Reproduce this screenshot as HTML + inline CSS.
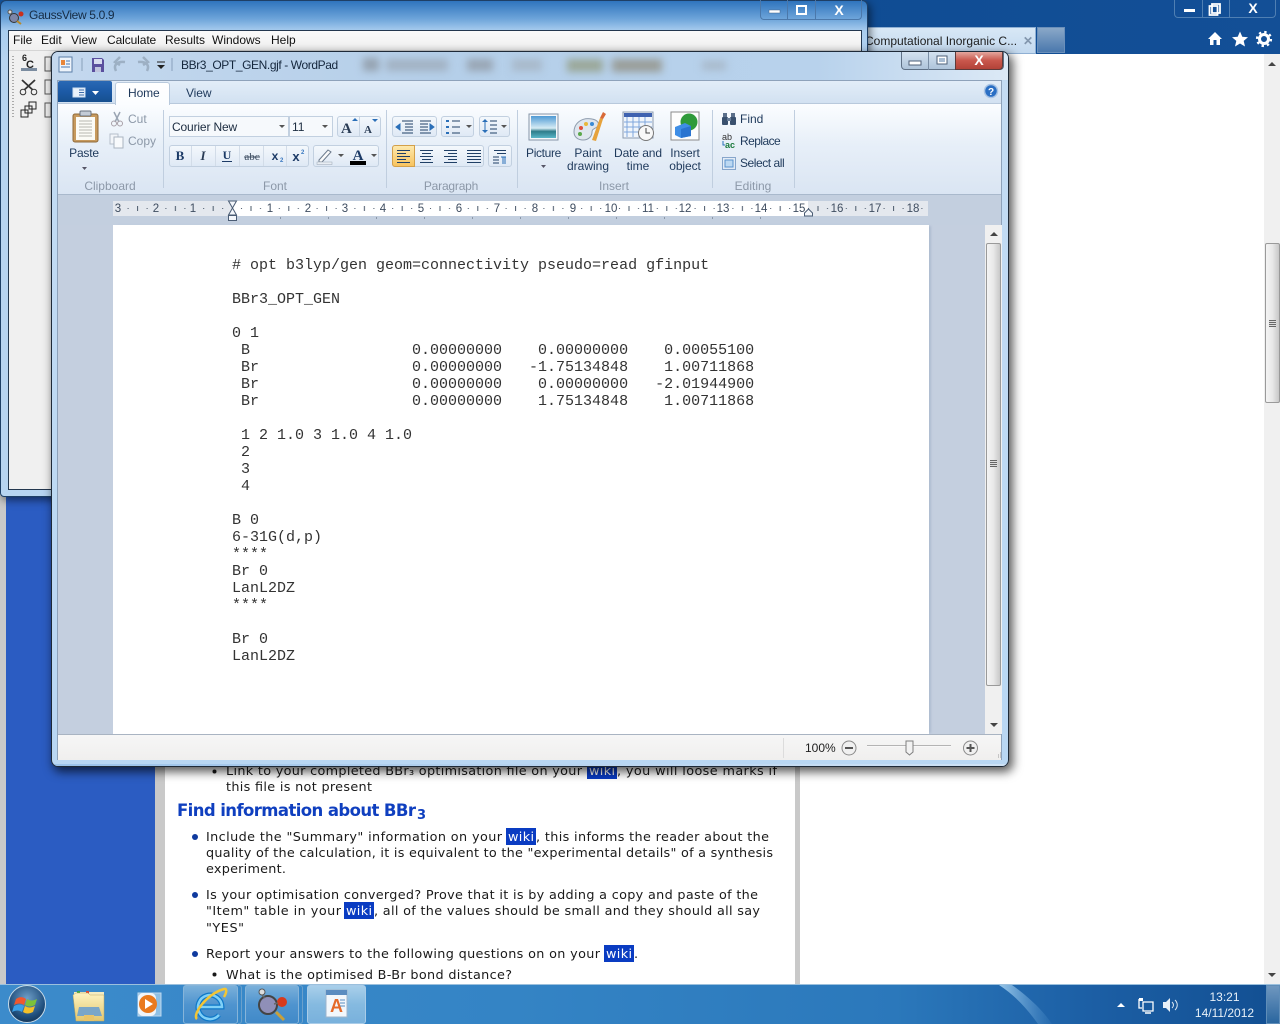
<!DOCTYPE html>
<html lang="en"><head><meta charset="utf-8"><title>WordPad</title>
<style>
html,body{margin:0;padding:0;width:1280px;height:1024px;overflow:hidden;background:#fff}
body{position:relative;font-family:"Liberation Sans",sans-serif;font-size:12px}
.a{position:absolute;box-sizing:border-box}
.t{position:absolute;white-space:nowrap;line-height:14px;height:14px}
.c{transform:translateX(-50%)}
.r{color:#1e395b}
.g{color:#8c98a8}
.btn{position:absolute;box-sizing:border-box;border:1px solid #c2d0e0;border-radius:3px;background:linear-gradient(#f4f8fc,#dfe9f5)}
.sep{position:absolute;top:110px;height:78px;width:1px;background:#c0cedf}
svg{position:absolute;overflow:visible}
pre{margin:0;font:15px/17px "Liberation Mono",monospace;color:#333}
.n{position:absolute;top:202px;font-size:11.5px;line-height:14px;color:#3f4d60;transform:translateX(-50%)}
</style></head><body>

<!-- browser background -->
<div class="a" style="left:0;top:0;width:1280px;height:54px;background:linear-gradient(90deg,#14549e,#0f4c94 60%,#134f96)"></div>
<div class="a" style="left:0;top:54px;width:6px;height:930px;background:#c9c9c9"></div>
<div class="a" style="left:6px;top:54px;width:149px;height:930px;background:#2b5cc2"></div>
<div class="a" style="left:155px;top:54px;width:10px;height:930px;background:#c9c9c9"></div>
<div class="a" style="left:795px;top:54px;width:5px;height:930px;background:#c9c9c9"></div>
<div class="a" style="left:1264px;top:54px;width:16px;height:930px;background:#f0f0f0"></div>
<div class="a" style="left:1265px;top:243px;width:15px;height:160px;border:1px solid #9a9a9a;border-radius:2px;background:linear-gradient(90deg,#f4f4f4,#e8e8e8 50%,#c8c8c8)"></div>
<div class="a" style="left:1269px;top:320px;width:7px;height:7px;background:repeating-linear-gradient(#666 0 1px,#ddd 1px 2px)"></div>
<svg style="left:0;top:0" width="1280" height="1024">
<path d="M1268 66l4-4 4 4zM1268 973l8 0-4 4z" fill="#444"/>
</svg>

<!-- browser tab & controls -->
<div class="a" style="left:860px;top:27px;width:176px;height:27px;background:linear-gradient(#d8e8f6,#c3d9ef);border:1px solid #8fb0d4"></div>
<div class="t" style="left:865px;top:34px;font-size:12px;color:#1c1c1c">Computational Inorganic C...</div>
<div class="t" style="left:1023px;top:34px;font-weight:bold;color:#8296ad;font-size:12px">✕</div>
<div class="a" style="left:1037px;top:27px;width:28px;height:26px;background:linear-gradient(#8aa8c8,#4a78ad);border:1px solid #6a8fba"></div>
<div class="a" style="left:1174px;top:0;width:102px;height:18px;border:1px solid #4f7fb3;border-top:0;border-radius:0 0 4px 4px"></div>
<div class="a" style="left:1202px;top:0;width:1px;height:18px;background:#4f7fb3"></div>
<div class="a" style="left:1229px;top:0;width:1px;height:18px;background:#4f7fb3"></div>
<svg style="left:0;top:0" width="1280" height="60">
<rect x="1184" y="9" width="11" height="3" fill="#fff"/>
<path d="M1212 4h8v9h-8zM1209.500 6h8v9h-8z" fill="none" stroke="#fff" stroke-width="1.800"/>
<text x="1253" y="13" text-anchor="middle" font-family="Liberation Sans,sans-serif" font-weight="bold" font-size="14" fill="#fff">X</text>
<path d="M1215 32l7 7h-2v6h-3.500v-5h-3v5H1210v-6h-2z" fill="#fff"/>
<path d="M1240 31.500l2.300 5.200 5.700.5-4.300 3.700 1.300 5.600-5-3-5 3 1.300-5.600-4.300-3.700 5.700-.5z" fill="#fff"/>
<circle cx="1264" cy="39" r="4.500" fill="none" stroke="#fff" stroke-width="3"/>
<circle cx="1264" cy="39" r="7" fill="none" stroke="#fff" stroke-width="2.200" stroke-dasharray="2.400 3.100"/>
</svg>

<!-- web page text -->
<svg style="left:0;top:0" width="1280" height="1024" font-family="DejaVu Sans,sans-serif" font-size="12.800" fill="#1a1a1a">
<rect x="587" y="762" width="30" height="17" fill="#0a3cc2"/>
<rect x="506" y="828" width="30" height="17" fill="#0a3cc2"/>
<rect x="344" y="902" width="30" height="17" fill="#0a3cc2"/>
<rect x="604" y="945" width="30" height="17" fill="#0a3cc2"/>
<text x="226" y="775" textLength="356">Link to your completed BBr₃ optimisation file on your</text>
<text x="589" y="775" textLength="26" fill="#fff">wiki</text>
<text x="617" y="775" textLength="160">, you will loose marks if</text>
<text x="226" y="791" textLength="146">this file is not present</text>
<text x="177" y="816" textLength="239" font-size="16.500" font-weight="bold" fill="#0f3fbf">Find information about BBr</text>
<text x="417" y="819" font-size="13" font-weight="bold" fill="#0f3fbf">3</text>
<text x="206" y="841" textLength="296">Include the "Summary" information on your</text>
<text x="508" y="841" textLength="26" fill="#fff">wiki</text>
<text x="536" y="841" textLength="233">, this informs the reader about the</text>
<text x="206" y="857" textLength="567">quality of the calculation, it is equivalent to the "experimental details" of a synthesis</text>
<text x="206" y="873" textLength="80">experiment.</text>
<text x="206" y="899" textLength="552">Is your optimisation converged? Prove that it is by adding a copy and paste of the</text>
<text x="206" y="915" textLength="135">"Item" table in your</text>
<text x="346" y="915" textLength="26" fill="#fff">wiki</text>
<text x="374" y="915" textLength="386">, all of the values should be small and they should all say</text>
<text x="206" y="932" textLength="38">"YES"</text>
<text x="206" y="958" textLength="394">Report your answers to the following questions on on your</text>
<text x="606" y="958" textLength="26" fill="#fff">wiki</text>
<text x="634" y="958">.</text>
<text x="226" y="979" textLength="286">What is the optimised B-Br bond distance?</text>
<g fill="#0f3a9e"><circle cx="195" cy="837" r="3"/><circle cx="195" cy="895" r="3"/><circle cx="195" cy="954" r="3"/></g>
<g fill="#1a1a1a"><circle cx="214.500" cy="771.500" r="2"/><circle cx="214.500" cy="974.500" r="2"/></g>
</svg>

<!-- GaussView window -->
<div class="a" style="left:0;top:0;width:868px;height:497px;background:linear-gradient(#2f74bd 0,#6ea5da 18px,#a9cdef 30px,#b7d4f1 60px);border:1px solid #1e3f66;border-radius:6px 6px 4px 4px;box-shadow:2px 3px 9px rgba(0,0,0,.55)"></div>
<div class="a" style="left:8px;top:30px;width:854px;height:460px;background:#f0f0f0;border:1px solid #23374f"></div>
<div class="a" style="left:9px;top:31px;width:852px;height:20px;background:linear-gradient(#fafafa,#f0f0f0);border-bottom:1px solid #d5d5d5"></div>
<svg style="left:0;top:0" width="60" height="30">
<circle cx="14" cy="18" r="4.500" fill="#7d86a8" stroke="#333"/><circle cx="10" cy="12" r="2" fill="#ddd" stroke="#555"/><circle cx="21" cy="14" r="2.500" fill="#c9301c"/><path d="M17 21l4 3" stroke="#b8892a" stroke-width="2"/>
</svg>
<div class="t" style="left:29px;top:8px;color:#152b44;letter-spacing:-.35px">GaussView 5.0.9</div>
<div class="t" style="left:13px;top:33px;color:#111">File</div>
<div class="t" style="left:41px;top:33px;color:#111">Edit</div>
<div class="t" style="left:71px;top:33px;color:#111">View</div>
<div class="t" style="left:107px;top:33px;color:#111;letter-spacing:-.1px">Calculate</div>
<div class="t" style="left:165px;top:33px;color:#111">Results</div>
<div class="t" style="left:212px;top:33px;color:#111">Windows</div>
<div class="t" style="left:271px;top:33px;color:#111">Help</div>
<div class="a" style="left:760px;top:0;width:102px;height:20px;border:1px solid #4b78aa;border-top:0;border-radius:0 0 4px 4px"></div>
<div class="a" style="left:787px;top:0;width:1px;height:20px;background:#4b78aa"></div>
<div class="a" style="left:815px;top:0;width:1px;height:20px;background:#4b78aa"></div>
<svg style="left:0;top:0" width="868" height="30">
<rect x="769" y="10" width="11" height="3" fill="#fff" stroke="#42648c" stroke-width=".5"/>
<rect x="797" y="6" width="9" height="8" fill="none" stroke="#fff" stroke-width="2"/>
<text x="839" y="15" text-anchor="middle" font-family="Liberation Sans,sans-serif" font-weight="bold" font-size="14" fill="#fff">X</text>
</svg>
<!-- gauss toolbar -->
<svg style="left:0;top:0" width="60" height="130">
<path d="M13 56v62" stroke="#aaa" stroke-width="2" stroke-dasharray="1 2"/>
<text x="22" y="61" font-family="Liberation Sans,sans-serif" font-weight="bold" font-size="9" fill="#222">6</text>
<text x="26" y="68" font-family="Liberation Sans,sans-serif" font-weight="bold" font-size="11" fill="#222">C</text>
<rect x="21" y="68" width="16" height="3" fill="#7b8ca0"/>
<path d="M22 80l13 12M35 80L22 92" stroke="#333" stroke-width="1.800"/><circle cx="23" cy="92" r="2.800" fill="#f0f0f0" stroke="#333"/><circle cx="34" cy="92" r="2.800" fill="#f0f0f0" stroke="#333"/>
<path d="M21 110h7v7h-7zM25 106h7v7h-7zM29 102h7v7h-7z" fill="#f0f0f0" stroke="#222"/>
<path d="M45 57h6v14h-6zM45 80h6v14h-6zM45 103h6v14h-6z" fill="none" stroke="#555"/>
</svg>

<!-- WordPad window -->
<div class="a" style="left:51px;top:51px;width:958px;height:716px;border:1px solid #1e2a38;border-radius:7px;background:linear-gradient(#a9c8e7,#c4dcf3 30px,#b9d7f3 700px);box-shadow:3px 4px 10px 1px rgba(0,0,0,.65);overflow:hidden">
 <div class="a" style="left:0;top:0;width:956px;height:28px;background:linear-gradient(90deg,#c4d8ee,#b5cfe9 40%,#b8d2ec 80%,#dce9f6);"></div>
 <div style="position:absolute;left:0;top:0;width:956px;height:28px;filter:blur(4px)">
  <i class="a" style="left:311px;top:6px;width:16px;height:13px;background:#95a2b0"></i>
  <i class="a" style="left:334px;top:7px;width:62px;height:12px;background:#a2b2c3"></i>
  <i class="a" style="left:415px;top:7px;width:26px;height:12px;background:#98a5b3"></i>
  <i class="a" style="left:460px;top:7px;width:30px;height:12px;background:#a8b9ca"></i>
  <i class="a" style="left:515px;top:7px;width:36px;height:13px;background:#9aa798"></i>
  <i class="a" style="left:560px;top:7px;width:50px;height:13px;background:#999d98"></i>
  <i class="a" style="left:650px;top:9px;width:24px;height:9px;background:#a8b9ca"></i>
 </div>
 <div class="a" style="left:0;top:712px;width:956px;height:3px;background:linear-gradient(90deg,#9cc3ea,#cfe2f5)"></div>
</div>
<svg style="left:0;top:0" width="1010" height="80">
<rect x="59" y="57" width="13" height="15" fill="#eef4fb" stroke="#5a7ea8"/><rect x="61" y="60" width="4" height="5" fill="#e8863a"/><path d="M66 61h4M66 64h4M61 67h9" stroke="#4a78b0"/>
<path d="M82 58v13" stroke="#88a0bb"/>
<path d="M92 58h10l2 2v12H92z" fill="#5a4f9e"/><rect x="94" y="59" width="8" height="5" fill="#d8dcf0"/><rect x="95" y="67" width="6" height="5" fill="#c0c4de"/>
<path d="M116 71c-3-6 1-10 9-9M120 57l-5 5 5 3" fill="none" stroke="#9db0c4" stroke-width="2.500"/>
<path d="M147 71c3-6-1-10-9-9M143 57l5 5-5 3" fill="none" stroke="#9db0c4" stroke-width="2.500"/>
<path d="M157 62h8" stroke="#222"/><path d="M157 65h8l-4 4z" fill="#222"/>
<path d="M172 58v13" stroke="#88a0bb"/>
</svg>
<div class="t" style="left:181px;top:58px;color:#14263c;letter-spacing:-.4px">BBr3_OPT_GEN.gjf - WordPad</div>
<div class="a" style="left:901px;top:52px;width:103px;height:18px;border:1px solid #5e7085;border-top:0;border-radius:0 0 4px 4px;background:linear-gradient(#d4e2f0,#aec4da)"></div>
<div class="a" style="left:928px;top:52px;width:1px;height:18px;background:#7a8ea5"></div>
<div class="a" style="left:955px;top:52px;width:48px;height:18px;border-radius:0 0 4px 0;background:linear-gradient(#e3a79e,#c9574c 50%,#b24238);border:1px solid #5e3a3a;border-top:0"></div>
<svg style="left:0;top:0" width="1010" height="80">
<rect x="909" y="61" width="12" height="4" fill="#fff" stroke="#4f6078"/>
<rect x="937" y="56" width="10" height="8" fill="#fff" stroke="#4f6078" stroke-width="1"/><rect x="939" y="58" width="6" height="4" fill="#a8bcd2"/>
<text x="979" y="65" text-anchor="middle" font-family="Liberation Sans,sans-serif" font-weight="bold" font-size="14" fill="#fff">X</text>
</svg>

<!-- ribbon -->
<div class="a" style="left:57px;top:80px;width:945px;height:680px;border:1px solid #8ea2ba;background:#c4cfdf"></div>
<div class="a" style="left:58px;top:81px;width:943px;height:22px;background:linear-gradient(#e2edf8,#d2e1f1)"></div>
<div class="a" style="left:58px;top:81px;width:54px;height:21px;background:linear-gradient(#2a69b5,#1c5aa6 50%,#16508f);border-radius:2px 2px 0 0"></div>
<svg style="left:0;top:0" width="112" height="103">
<rect x="73" y="88" width="12" height="9" fill="#eaf2fb" stroke="#cfe0f2"/><path d="M79 90h5M79 92.500h5M79 95h5" stroke="#3a6aa8"/>
<path d="M92 91h7l-3.500 4z" fill="#fff"/>
</svg>
<div class="a" style="left:115px;top:82px;width:55px;height:22px;border:1px solid #b8c9dc;border-bottom:0;border-radius:3px 3px 0 0;background:linear-gradient(#fff,#fbfdff)"></div>
<div class="t r" style="left:128px;top:86px;letter-spacing:-.1px">Home</div>
<div class="t r" style="left:186px;top:86px;letter-spacing:-.1px">View</div>
<div class="a" style="left:58px;top:103px;width:943px;height:92px;background:linear-gradient(#fbfdff,#e7eff8 45%,#dae5f3);border-top:1px solid #b8c9dc;border-bottom:1px solid #a9b9cc"></div>
<div class="a" style="left:115px;top:102px;width:55px;height:3px;background:#fbfdff;border-left:1px solid #b8c9dc;border-right:1px solid #b8c9dc"></div>
<svg style="left:0;top:0" width="1010" height="110">
<circle cx="991" cy="91" r="6.500" fill="#2a6fc4" stroke="#a9c4e4" stroke-width="1.500"/>
<text x="991" y="95" text-anchor="middle" font-family="Liberation Sans,sans-serif" font-weight="bold" font-size="10" fill="#fff">?</text>
</svg>
<div class="sep" style="left:163px"></div><div class="sep" style="left:386px"></div><div class="sep" style="left:517px"></div><div class="sep" style="left:712px"></div><div class="sep" style="left:794px"></div>
<div class="t g c" style="left:110px;top:179px">Clipboard</div>
<div class="t g c" style="left:275px;top:179px">Font</div>
<div class="t g c" style="left:451px;top:179px;letter-spacing:-.2px">Paragraph</div>
<div class="t g c" style="left:614px;top:179px">Insert</div>
<div class="t g c" style="left:753px;top:179px">Editing</div>

<!-- clipboard -->
<svg style="left:0;top:0" width="160" height="175">
<rect x="73" y="114" width="25" height="28" rx="2" fill="#c79a5e" stroke="#8f6a3a"/>
<rect x="76" y="117" width="19" height="23" fill="#fbfbf6"/>
<path d="M79 121h13M79 124h13M79 127h13M79 130h13M79 133h13M79 136h13" stroke="#b7b7b0"/>
<rect x="80" y="111" width="11" height="5" rx="1" fill="#c4ccd6" stroke="#68727e"/>
<path d="M82 167h5l-2.500 3z" fill="#556"/>
<path d="M114 112l5 10M120 112l-5 10" stroke="#9aa5b3" stroke-width="1.500"/><circle cx="114" cy="123.500" r="2.500" fill="none" stroke="#a8a0a8"/><circle cx="120" cy="123.500" r="2.500" fill="none" stroke="#a8a0a8"/>
<rect x="110" y="134" width="8" height="10" fill="#f2f5f9" stroke="#b6bfca"/><rect x="114" y="137" width="9" height="11" fill="#f8fafc" stroke="#aab4c0"/>
</svg>
<div class="t r c" style="left:84px;top:146px;letter-spacing:-.2px">Paste</div>
<div class="t g" style="left:128px;top:112px">Cut</div>
<div class="t g" style="left:128px;top:134px">Copy</div>

<!-- font group -->
<div class="a" style="left:169px;top:116px;width:120px;height:21px;border:1px solid #c2d0e0;background:#f6f9fc"></div>
<div class="a" style="left:289px;top:116px;width:44px;height:21px;border:1px solid #c2d0e0;background:#f6f9fc"></div>
<div class="t" style="left:172px;top:120px;color:#1c2c40;letter-spacing:-.15px">Courier New</div>
<div class="t" style="left:292px;top:120px;color:#1c2c40">11</div>
<div class="btn" style="left:337px;top:116px;width:44px;height:21px"></div>
<div class="a" style="left:359px;top:117px;width:1px;height:19px;background:#c8d4e2"></div>
<div class="btn" style="left:169px;top:145px;width:140px;height:22px"></div>
<div class="a" style="left:191px;top:146px;width:1px;height:20px;background:#d2dce8"></div>
<div class="a" style="left:215px;top:146px;width:1px;height:20px;background:#d2dce8"></div>
<div class="a" style="left:239px;top:146px;width:1px;height:20px;background:#d2dce8"></div>
<div class="a" style="left:263px;top:146px;width:1px;height:20px;background:#d2dce8"></div>
<div class="a" style="left:286px;top:146px;width:1px;height:20px;background:#d2dce8"></div>
<div class="btn" style="left:313px;top:145px;width:66px;height:22px"></div>
<svg style="left:0;top:0" width="400" height="180" font-family="Liberation Serif,serif" font-weight="bold" fill="#1c3a66">
<path d="M279 125h6l-3 3zM322 125h6l-3 3z" fill="#555"/>
<text x="341" y="133" font-size="15" fill="#2a3c55">A</text><path d="M352 121l3-3 3 3z" fill="#2a6fb8"/>
<text x="364" y="133" font-size="11" fill="#2a3c55">A</text><path d="M372 119l3 3 3-3z" fill="#2a6fb8"/>
<text x="180" y="160" text-anchor="middle" font-size="13">B</text>
<text x="203" y="160" text-anchor="middle" font-size="13" font-style="italic" fill="#2a3c55">I</text>
<text x="227" y="159" text-anchor="middle" font-size="12">U</text><rect x="222" y="161" width="10" height="1" fill="#1c3a66"/>
<text x="252" y="160" text-anchor="middle" font-size="11" font-weight="normal" fill="#3c4c60">abc</text><rect x="244" y="156.500" width="16" height="1" fill="#3c4c60"/>
<text x="275" y="160" text-anchor="middle" font-family="Liberation Sans,sans-serif" font-size="12">x</text><text x="280" y="162" font-size="6" font-family="Liberation Sans,sans-serif" fill="#3a78c0">2</text>
<text x="296" y="161" text-anchor="middle" font-family="Liberation Sans,sans-serif" font-size="13">x</text><text x="301" y="154" font-size="6" font-family="Liberation Sans,sans-serif" fill="#3a78c0">2</text>
<path d="M319 160l9-10 3 2-9 10h-3z" fill="#fafafa" stroke="#6b7a8c"/><rect x="317" y="162" width="15" height="2.500" fill="#e8edf3" stroke="#9aa5b3" stroke-width=".5"/>
<path d="M338 154h6l-3 3zM371 154h6l-3 3z" fill="#555"/>
<text x="358" y="160" text-anchor="middle" font-size="15" fill="#1c3a66">A</text><rect x="350" y="161" width="16" height="4" fill="#000"/>
</svg>

<!-- paragraph group -->
<div class="btn" style="left:392px;top:116px;width:45px;height:21px"></div>
<div class="btn" style="left:441px;top:116px;width:33px;height:21px"></div>
<div class="btn" style="left:479px;top:116px;width:31px;height:21px"></div>
<div class="btn" style="left:392px;top:145px;width:92px;height:22px"></div>
<div class="a" style="left:392px;top:145px;width:23px;height:22px;background:linear-gradient(#fde9ad,#f8c35e);border:1px solid #d3a04a;border-radius:3px 0 0 3px"></div>
<div class="btn" style="left:488px;top:145px;width:24px;height:22px"></div>
<svg style="left:0;top:0" width="520" height="180" stroke="#1f3f66" fill="none">
<path d="M402 121h11M405 124h8M405 127h8M405 130h8M402 133h11"/><path d="M396 127l4-3v6z" fill="#2a6fb8" stroke="#2a6fb8"/>
<path d="M420 121h11M420 124h8M420 127h8M420 130h8M420 133h11"/><path d="M434 127l-4-3v6z" fill="#2a6fb8" stroke="#2a6fb8"/>
<path d="M452 121h8M452 127h8M452 133h8"/><path d="M446 120h3v2h-3zM446 126h3v2h-3zM446 132h3v2h-3z" fill="#2a6fb8" stroke="none"/>
<path d="M466 125h6l-3 3z" fill="#555" stroke="none"/>
<path d="M490 121h7M490 125h7M490 129h7M490 133h7"/><path d="M482 122l3-3 3 3zM482 130l3 3 3-3z" fill="#2a6fb8" stroke="none"/><path d="M485 122v8" stroke="#2a6fb8"/>
<path d="M501 125h6l-3 3z" fill="#555" stroke="none"/>
<path d="M397 150.500h13M397 153.500h9M397 156.500h13M397 159.500h9M397 162.500h13"/>
<path d="M420 150.500h13M422 153.500h9M420 156.500h13M422 159.500h9M420 162.500h13"/>
<path d="M444 150.500h13M448 153.500h9M444 156.500h13M448 159.500h9M444 162.500h13"/>
<path d="M467 150.500h14M467 153.500h14M467 156.500h14M467 159.500h14M467 162.500h14"/>
<path d="M494 150.500h12M497 153.500h9M493 157h6M493 160h6M493 163h6"/><path d="M501 157h5M503 157v7M505 157v7" stroke="#2a6fb8"/>
</svg>

<!-- insert group -->
<svg style="left:0;top:0" width="800" height="180">
<defs><linearGradient id="sky" x1="0" y1="0" x2="0" y2="1"><stop offset="0" stop-color="#4f9ad4"/><stop offset=".55" stop-color="#d6ecf5"/><stop offset=".7" stop-color="#2e7c8a"/><stop offset="1" stop-color="#5ab6c8"/></linearGradient></defs>
<rect x="529" y="114" width="29" height="26" fill="#f5f7fa" stroke="#8595a8"/><rect x="531" y="116" width="25" height="22" fill="url(#sky)"/>
<path d="M574 132c0-9 8-15 18-13 6 1 8 5 5 8-3 2-5 2-5 5 0 4-3 8-9 8-5 0-9-3-9-8z" fill="#dfe6ee" stroke="#8e9cad"/>
<circle cx="581" cy="128" r="2" fill="#e0503c"/><circle cx="586" cy="124" r="2" fill="#e8b83a"/><circle cx="580" cy="134" r="2" fill="#5aa84a"/><circle cx="592" cy="124" r="2" fill="#3a8ad4"/>
<path d="M592 140l8-22 3 1-7 22z" fill="#e6a23c"/><path d="M600 118l3-6 3 2-3 5z" fill="#d86a38"/>
<rect x="623" y="112" width="30" height="26" fill="#f0f5fb" stroke="#8c9bb0"/><rect x="624" y="113" width="28" height="4" fill="#3f62b0"/>
<path d="M627 117v20M633 117v20M639 117v20M645 117v20M624 122h28M624 127h28M624 132h28" stroke="#7fa6dc"/>
<circle cx="646" cy="133" r="7.500" fill="#f8f8f8" stroke="#777"/><path d="M646 128v5h4" stroke="#444" fill="none"/>
<rect x="671" y="112" width="28" height="28" fill="#fdfdfd" stroke="#8a8a8a"/>
<circle cx="689" cy="122" r="8.500" fill="#2f9a3a"/><path d="M675 127l10-4 6 3v10l-10 2-6-3z" fill="#3f8ee6"/><path d="M681 129l10-3v10l-10 2z" fill="#2a74d0"/>
<path d="M723 113h4v4h-4zM731 113h4v4h-4z" fill="#5b6f8a"/><rect x="722" y="117" width="6" height="8" rx="1" fill="#39506e"/><rect x="730" y="117" width="6" height="8" rx="1" fill="#39506e"/><rect x="727" y="118" width="4" height="3" fill="#6a7f9a"/>
<text x="722" y="140" font-family="Liberation Sans,sans-serif" font-size="9" fill="#333">ab</text><text x="725" y="148" font-family="Liberation Sans,sans-serif" font-size="9" font-weight="bold" fill="#1b7a3c">ac</text><path d="M723 141v4h2" stroke="#2a6fb8" fill="none"/>
<rect x="722.500" y="157.500" width="13" height="12" fill="none" stroke="#2a5fa0" stroke-dasharray="1 1"/><rect x="725" y="160" width="8" height="7" fill="#bcd8f2" stroke="#5a92cc"/>
</svg>
<div class="t r c" style="left:543.500px;top:146px;letter-spacing:-.35px">Picture</div>
<svg style="left:0;top:0" width="560" height="175"><path d="M541 165h5l-2.500 3z" fill="#556"/></svg>
<div class="t r c" style="left:588px;top:146px">Paint</div><div class="t r c" style="left:588px;top:159px">drawing</div>
<div class="t r c" style="left:638px;top:146px;letter-spacing:-.1px">Date and</div><div class="t r c" style="left:638px;top:159px">time</div>
<div class="t r c" style="left:685px;top:146px;letter-spacing:-.1px">Insert</div><div class="t r c" style="left:685px;top:159px;letter-spacing:-.1px">object</div>
<div class="t r" style="left:740px;top:112px">Find</div>
<div class="t r" style="left:740px;top:134px;letter-spacing:-.55px">Replace</div>
<div class="t r" style="left:740px;top:156px;letter-spacing:-.45px">Select all</div>

<!-- ruler -->
<div class="a" style="left:58px;top:195px;width:943px;height:30px;background:#c3cfdf"></div>
<div class="a" style="left:113px;top:201px;width:815px;height:15px;background:#e4e8ee"></div>
<div class="a" style="left:232px;top:201px;width:576px;height:15px;background:#fff"></div>
<svg style="left:113px;top:201px" width="815" height="18">
<defs><pattern id="tk" x="119" y="0" width="37.800" height="18" patternUnits="userSpaceOnUse"><rect x="9" y="7" width="1" height="1" fill="#4a586a"/><rect x="18.500" y="5" width="1" height="5" fill="#4a586a"/><rect x="28" y="7" width="1" height="1" fill="#4a586a"/></pattern></defs>
<rect width="815" height="15" fill="url(#tk)"/>
<path d="M167 16h1v2h-1zM215 16h1v2h-1zM263 16h1v2h-1zM311 16h1v2h-1zM359 16h1v2h-1zM407 16h1v2h-1zM455 16h1v2h-1zM503 16h1v2h-1zM551 16h1v2h-1zM599 16h1v2h-1zM647 16h1v2h-1z" fill="#8a97a8"/>
</svg>
<div class="n" style="left:118px">3</div><div class="n" style="left:156px">2</div><div class="n" style="left:193px">1</div>
<div class="n" style="left:270px">1</div><div class="n" style="left:308px">2</div><div class="n" style="left:345px">3</div><div class="n" style="left:383px">4</div><div class="n" style="left:421px">5</div><div class="n" style="left:459px">6</div><div class="n" style="left:497px">7</div><div class="n" style="left:535px">8</div><div class="n" style="left:573px">9</div><div class="n" style="left:611px">10</div><div class="n" style="left:648px">11</div><div class="n" style="left:685px">12</div><div class="n" style="left:723px">13</div><div class="n" style="left:761px">14</div><div class="n" style="left:799px">15</div><div class="n" style="left:837px">16</div><div class="n" style="left:875px">17</div><div class="n" style="left:913px">18</div>
<svg style="left:0;top:0" width="830" height="225">
<path d="M228.500 201h8l-4 7 4 7h-8l4-7z" fill="#f4f7fb" stroke="#4a5c74"/><rect x="228.500" y="215.500" width="8" height="5" fill="#f4f7fb" stroke="#4a5c74"/>
<path d="M808.500 209l4 4v3h-8v-3z" fill="#f4f7fb" stroke="#4a5c74"/>
</svg>

<!-- document -->
<div class="a" style="left:113px;top:225px;width:816px;height:509px;background:#fff;box-shadow:3px 0 2px -1px #aebdd0"></div>
<pre class="a" style="left:232px;top:257px"># opt b3lyp/gen geom=connectivity pseudo=read gfinput

BBr3_OPT_GEN

0 1
 B                  0.00000000    0.00000000    0.00055100
 Br                 0.00000000   -1.75134848    1.00711868
 Br                 0.00000000    0.00000000   -2.01944900
 Br                 0.00000000    1.75134848    1.00711868

 1 2 1.0 3 1.0 4 1.0
 2
 3
 4

B 0
6-31G(d,p)
****
Br 0
LanL2DZ
****

Br 0
LanL2DZ</pre>

<!-- wordpad scrollbar -->
<div class="a" style="left:985px;top:225px;width:17px;height:509px;background:#f0f0f0"></div>
<div class="a" style="left:986px;top:243px;width:15px;height:443px;border:1px solid #9a9a9a;border-radius:2px;background:linear-gradient(90deg,#f4f4f4,#e8e8e8 50%,#c8c8c8)"></div>
<div class="a" style="left:990px;top:460px;width:7px;height:7px;background:repeating-linear-gradient(#666 0 1px,#ddd 1px 2px)"></div>
<svg style="left:0;top:0" width="1010" height="740"><path d="M990 236l4-4 4 4zM990 723h8l-4 4z" fill="#444"/></svg>

<!-- status bar -->
<div class="a" style="left:58px;top:734px;width:943px;height:26px;background:linear-gradient(#f6f6f6,#f0efee);border-top:1px solid #a9b4c2"></div>
<div class="a" style="left:783px;top:738px;width:1px;height:20px;background:#dcdcdc"></div>
<div class="t" style="left:805px;top:741px;color:#1e1e1e">100%</div>
<svg style="left:0;top:0" width="1010" height="768">
<circle cx="849" cy="748" r="7" fill="#f0f0f0" stroke="#8a8a8a"/><path d="M845 748h8" stroke="#555" stroke-width="2"/>
<circle cx="970.500" cy="748" r="7" fill="#f0f0f0" stroke="#8a8a8a"/><path d="M966.500 748h8M970.500 744v8" stroke="#555" stroke-width="2"/>
<path d="M867 745.500h84" stroke="#b4b4b4"/><path d="M867 746.500h84" stroke="#f8f8f8"/>
<path d="M906 741h7v11l-3.500 3-3.500-3z" fill="#f2f2f2" stroke="#7f7f7f"/>
<path d="M998 757h1M1000 757h1M1000 755h1M998 755h1M1000 753h1" stroke="#9a9a9a"/>
</svg>

<!-- taskbar -->
<div class="a" style="left:0;top:984px;width:1280px;height:40px;background:linear-gradient(90deg,#3c8bcb 0,#3484c5 40%,#2b78bb 70%,#1c5fa5 85%,#124f92 100%);border-top:1px solid #9bc0dd"></div>
<svg style="left:0;top:985px" width="1280" height="39">
<defs><linearGradient id="st" x1="0" y1="0" x2="1" y2="0"><stop offset="0" stop-color="#a8d2f0" stop-opacity=".9"/><stop offset="1" stop-color="#5fa0d8" stop-opacity=".1"/></linearGradient></defs>
<path d="M999 0h13c14 10 30 24 40 39h-14c-10-14-22-28-39-39z" fill="url(#st)"/>
</svg>
<div class="a" style="left:183px;top:985px;width:55px;height:39px;border:1px solid #86b4d9;border-radius:3px;background:linear-gradient(#7ab0da,#4f94cf 50%,#4089c8)"></div>
<div class="a" style="left:238px;top:985px;width:4px;height:39px;border:1px solid #6aa0cc;border-left:0;border-radius:0 3px 3px 0"></div>
<div class="a" style="left:245px;top:985px;width:54px;height:39px;border:1px solid #86b4d9;border-radius:3px;background:linear-gradient(#7ab0da,#4f94cf 50%,#4089c8)"></div>
<div class="a" style="left:299px;top:985px;width:4px;height:39px;border:1px solid #6aa0cc;border-left:0;border-radius:0 3px 3px 0"></div>
<div class="a" style="left:307px;top:985px;width:59px;height:39px;border:1px solid #a9cce8;border-radius:3px;background:linear-gradient(#a8cfea,#85bae0 50%,#79b1dc)"></div>
<svg style="left:0;top:0" width="1280" height="1024">
<defs>
<radialGradient id="orb" cx=".5" cy=".35" r=".7"><stop offset="0" stop-color="#6f9fc8"/><stop offset=".7" stop-color="#1f4e7c"/><stop offset="1" stop-color="#12304f"/></radialGradient>
<linearGradient id="fold" x1="0" y1="0" x2="0" y2="1"><stop offset="0" stop-color="#fdf3c0"/><stop offset="1" stop-color="#e3c66e"/></linearGradient>
</defs>
<circle cx="27" cy="1004" r="18.500" fill="url(#orb)" stroke="#c8dbe8" stroke-width="1"/>
<path d="M16 999c4-3 7-2 10 0l-2 6c-3-2-6-2-10 0z" fill="#f0582e"/>
<path d="M27 999c3 2 6 2 10 0l-2 6c-4 2-7 2-10 0z" fill="#7cc23a"/>
<path d="M14 1006c4-2 7-2 10 0l-2 6c-3-2-6-2-10 0z" fill="#3aa0e8"/>
<path d="M25 1006c3 2 6 2 10 0l-2 6c-4 2-7 2-10 0z" fill="#f4c028"/>
<path d="M74 992h30v6H74z" fill="#f4ecc0"/><rect x="77" y="991" width="3" height="3" fill="#3aa84a"/><rect x="86" y="991" width="3" height="3" fill="#d84a3a"/>
<path d="M73 995l3-2h12l2 2h14v26H76z" fill="url(#fold)" stroke="#c0a860" stroke-width=".5"/>
<path d="M79 1007h20l3 9H77z" fill="#7aa6c8"/><rect x="84" y="1015" width="10" height="6" fill="#e9c468"/>
<rect x="138" y="993" width="23" height="23" fill="#8fc0e4" stroke="#bcd8ee"/><rect x="138" y="993" width="18" height="23" rx="5" fill="#f0f5fa"/>
<circle cx="148" cy="1004" r="9" fill="#ea7a1e"/><path d="M145 999l8 5-8 5z" fill="#fff"/>
<path d="M198 1007h24A12 12 0 1 0 219 1015" fill="none" stroke="#0f78c8" stroke-width="5"/>
<path d="M198 1007h24A12 12 0 1 0 219 1015" fill="none" stroke="#7fd0f7" stroke-width="2.500"/>
<path d="M197 1019c-5-4 9-25 27-30 3-1 3 3 0 8" fill="none" stroke="#f2c536" stroke-width="2.500"/>
<circle cx="262" cy="992" r="3" fill="#ddd" stroke="#555"/>
<circle cx="268" cy="1005" r="9" fill="#8f8fb8" stroke="#444" stroke-width="2"/>
<circle cx="282" cy="1002" r="5" fill="#d83a1c"/><path d="M276 1012l8 8" stroke="#c9a03a" stroke-width="3"/><path d="M262 995l3 3M274 1004l4-1" stroke="#666" stroke-width="1.500"/>
<rect x="326" y="990" width="21" height="27" fill="#f2f7fc" stroke="#9eb4cc"/><rect x="326" y="990" width="21" height="5" fill="#5a8cc0"/>
<text x="330" y="1012" font-family="Liberation Sans,sans-serif" font-size="18" font-weight="bold" fill="#e56a2a">A</text><path d="M340 1000h5M340 1003h5M340 1006h5" stroke="#5a8cc0"/>
<path d="M1117 1007l4-4 4 4z" fill="#fff"/>
<path d="M1139 999v9h3M1143 1002h10v9h-10z" fill="none" stroke="#fff" stroke-width="1.300"/><rect x="1139" y="998" width="4" height="3" fill="#fff"/><path d="M1145 1013h6" stroke="#fff" stroke-width="1.500"/>
<path d="M1163 1002h3l4-4v14l-4-4h-3z" fill="#e8f0f8"/><path d="M1172 1002c2 2 2 4 0 6M1175 1000c3 3 3 7 0 10" fill="none" stroke="#dde8f2"/>
</svg>
<div class="t c" style="left:1224.500px;top:990px;color:#e8f1f8">13:21</div>
<div class="t c" style="left:1224.500px;top:1006px;color:#e8f1f8">14/11/2012</div>
<div class="a" style="left:1266px;top:985px;width:14px;height:39px;border:1px solid #5f8db8;background:linear-gradient(#6f97bf,#2a669f)"></div>
</body></html>
